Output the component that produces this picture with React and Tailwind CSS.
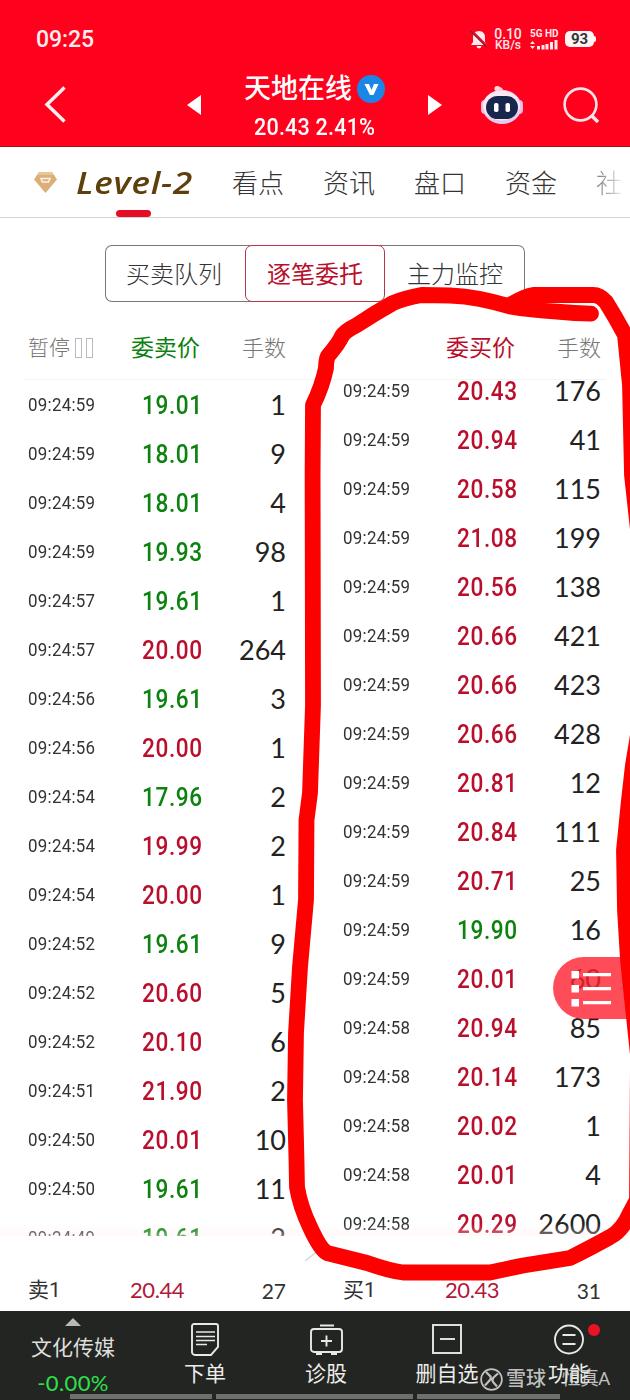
import React from 'react';

const sellOrders = [
    ["09:24:59", "19.01", "1", "down"],
    ["09:24:59", "18.01", "9", "down"],
    ["09:24:59", "18.01", "4", "down"],
    ["09:24:59", "19.93", "98", "down"],
    ["09:24:57", "19.61", "1", "down"],
    ["09:24:57", "20.00", "264", "up"],
    ["09:24:56", "19.61", "3", "down"],
    ["09:24:56", "20.00", "1", "up"],
    ["09:24:54", "17.96", "2", "down"],
    ["09:24:54", "19.99", "2", "up"],
    ["09:24:54", "20.00", "1", "up"],
    ["09:24:52", "19.61", "9", "down"],
    ["09:24:52", "20.60", "5", "up"],
    ["09:24:52", "20.10", "6", "up"],
    ["09:24:51", "21.90", "2", "up"],
    ["09:24:50", "20.01", "10", "up"],
    ["09:24:50", "19.61", "11", "down"],
    ["09:24:49", "19.61", "2", "down"],
];

const buyOrders = [
    ["09:24:59", "20.43", "176", "up"],
    ["09:24:59", "20.94", "41", "up"],
    ["09:24:59", "20.58", "115", "up"],
    ["09:24:59", "21.08", "199", "up"],
    ["09:24:59", "20.56", "138", "up"],
    ["09:24:59", "20.66", "421", "up"],
    ["09:24:59", "20.66", "423", "up"],
    ["09:24:59", "20.66", "428", "up"],
    ["09:24:59", "20.81", "12", "up"],
    ["09:24:59", "20.84", "111", "up"],
    ["09:24:59", "20.71", "25", "up"],
    ["09:24:59", "19.90", "16", "down"],
    ["09:24:59", "20.01", "60", "up"],
    ["09:24:58", "20.94", "85", "up"],
    ["09:24:58", "20.14", "173", "up"],
    ["09:24:58", "20.02", "1", "up"],
    ["09:24:58", "20.01", "4", "up"],
    ["09:24:58", "20.29", "2600", "up"],
];

function StatusBar() {
    return (
        <div className="flex h-[58px] items-center pl-9 pr-[34px] pt-5">
            <span className="text-[23px] font-medium leading-none tracking-[-0.1px] text-[#ffeef0]">09:25</span>
            <div className="ml-auto flex h-6 items-center">
                <svg className="mr-[7px] h-[19px] w-[18px]" viewBox="0 0 18 19">
                    <path d="M9 1c-4 0-6 3-6 6v5l-2 3h16l-2-3V7c0-3-2-6-6-6z" fill="#ffe9ec" />
                    <path d="M6.500 16h5a2.500 2.500 0 0 1-5 0z" fill="#ffe9ec" />
                    <path d="M1.500 0.500l16 16" stroke="#ff001d" strokeWidth="2" />
                    <path d="M0.500 1l16 16" stroke="#7c2630" strokeWidth="1.200" />
                </svg>
                <div className="mr-[9px] flex w-[26px] flex-col items-center text-[12px] font-medium leading-[11px] text-[#ffe9ec]">
                    <span className="text-[14px] leading-[12px] tracking-[-0.1px]">0.10</span>
                    <span className="leading-[11px]">KB/s</span>
                </div>
                <div className="mr-[6px] flex w-[29px] flex-col gap-[2px] text-[#ffe9ec]">
                    <span className="whitespace-nowrap text-[10px] font-bold leading-[9px]">5G HD</span>
                    <svg className="h-[10px] w-[28px]" viewBox="0 0 28 10" fill="currentColor">
                        <path d="M0 4l2.500-3L5 4zM0 6l2.500 3L5 6z" />
                        <rect x="7" y="6" width="3" height="3.500" />
                        <rect x="11.500" y="5" width="3" height="4.500" />
                        <rect x="15.500" y="4" width="3" height="5.500" />
                        <rect x="20" y="2" width="3" height="7.500" />
                        <rect x="24.500" y="0" width="3" height="9.500" />
                    </svg>
                </div>
                <div className="flex items-center">
                    <span className="flex h-4 w-[29px] items-center justify-center rounded-[5px] bg-[#fff5f5] text-[15px] font-bold leading-none text-[#333]">93</span>
                    <span className="h-[6px] w-[2px] rounded-r bg-[#fff5f5]"></span>
                </div>
            </div>
        </div>
    );
}

function RobotIcon() {
    return (
        <svg className="h-[40px] w-[44px]" viewBox="0 0 44 40">
            <path d="M22 7c0-3-2-4-5-4" fill="none" stroke="#ffc4cf" strokeWidth="3" strokeLinecap="round" />
            <circle cx="17" cy="3.500" r="2.600" fill="#ffd6dd" />
            <rect x="1" y="15" width="8" height="14" rx="4" fill="#f5b9cf" />
            <rect x="35" y="15" width="8" height="14" rx="4" fill="#f0b5e0" />
            <ellipse cx="22" cy="22" rx="19.500" ry="17" fill="#e3c8f2" />
            <ellipse cx="21.500" cy="20.500" rx="18.500" ry="15" fill="#fce8f3" />
            <rect x="6" y="11" width="32" height="23" rx="11.500" fill="#17264d" />
            <rect x="14" y="18" width="4.500" height="9" rx="1.800" fill="#fff" />
            <rect x="25.500" y="18" width="4.500" height="9" rx="1.800" fill="#fff" />
        </svg>
    );
}

function Header() {
    return (
        <header className="h-[147px] shrink-0 border-b border-[#a3131e] bg-[#ff001d] text-white">
            <StatusBar />
            <div className="flex h-[88px] items-center pt-[5px]">
                <svg className="ml-[44px] h-[38px] w-[23px]" viewBox="0 0 23 38" fill="none" stroke="#ffeff0" strokeWidth="3.500">
                    <path d="M20.500 1.500L3 18.500l17.500 17" />
                </svg>
                <svg className="ml-[120px] h-[22px] w-[14px]" viewBox="0 0 14 22" fill="#fff">
                    <path d="M0 11L14 1v20z" />
                </svg>
                <div className="ml-[43px] flex w-[144px] flex-col items-start pt-[7px]">
                    <div className="flex items-center gap-[5px]">
                        <span className="whitespace-nowrap text-[27px] font-medium leading-[38px]">天地在线</span>
                        <svg className="h-7 w-7" viewBox="0 0 28 28">
                            <circle cx="14" cy="14" r="14" fill="#1c86e6" />
                            <path d="M7.500 9h4.500l2.500 6 2.500-6h4.500l-5 11h-3.500z" fill="#fff" />
                        </svg>
                    </div>
                    <span className="ml-[10px] origin-left scale-x-90 whitespace-nowrap text-[24px] font-medium leading-[38px] tracking-[0.2px]">20.43 2.41%</span>
                </div>
                <svg className="ml-[40px] h-[22px] w-[14px]" viewBox="0 0 14 22" fill="#fff">
                    <path d="M14 11L0 1v20z" />
                </svg>
                <div className="ml-[38px]">
                    <RobotIcon />
                </div>
                <svg className="ml-[39px] h-[36px] w-[36px]" viewBox="0 0 36 36" fill="none" stroke="#ffe3e6" strokeWidth="2.600">
                    <circle cx="17.500" cy="17.500" r="15.900" />
                    <path d="M28 28l7 7" strokeWidth="3.500" />
                </svg>
            </div>
        </header>
    );
}

function Tabs() {
    return (
        <nav className="flex h-[71px] shrink-0 items-center overflow-hidden border-b border-[#d4d4d4] pl-[34px] text-[26px] text-[#333]">
            <svg className="h-[21px] w-[23px]" viewBox="0 0 23 21">
                <path d="M5 0h13l5 7.500L11.500 21 0 7.500z" fill="#dcae78" />
                <path d="M5 0h13l2 3H3z" fill="#e8c59a" />
                <path d="M7 6.500h9l-1.500 3.500h-6z" fill="none" stroke="#fdf3e3" strokeWidth="1.600" />
            </svg>
            <div className="relative ml-[19px] flex h-full w-[117px] items-center">
                <span className="origin-left scale-x-[1.13] whitespace-nowrap font-['Open_Sans',sans-serif] text-[31px] font-semibold italic leading-none tracking-[0.7px] text-[#5d400b]">Level-2</span>
                <span className="absolute bottom-0 left-[40px] h-[7px] w-[35px] rounded-full bg-[#e60d27]"></span>
            </div>
            <div className="ml-[39px] flex gap-[39px] whitespace-nowrap pt-[4px] font-light">
                <span>看点</span>
                <span>资讯</span>
                <span>盘口</span>
                <span>资金</span>
                <span className="bg-gradient-to-r from-[#777] to-[#eee] bg-clip-text text-transparent">社</span>
            </div>
        </nav>
    );
}

function Segments() {
    return (
        <div className="mx-auto mt-[27px] flex h-[57px] w-[420px] shrink-0 items-stretch text-[24px] font-light leading-none text-[#333]">
            <div className="flex w-[146px] items-center rounded-l-[7px] border border-r-0 border-[#777] pl-5 pt-[3px]">买卖队列</div>
            <div className="z-10 -ml-[6px] flex w-[140px] items-center justify-center rounded-[7px] border border-[#b6344a] bg-white pt-[3px] font-normal text-[#b90f2c]">逐笔委托</div>
            <div className="-ml-[6px] flex w-[146px] items-center justify-end rounded-r-[7px] border border-l-0 border-[#777] pr-[21px] pt-[3px]">主力监控</div>
        </div>
    );
}

function ColumnHeads() {
    return (
        <div className="grid h-[77px] shrink-0 grid-cols-2 pt-[17px] text-[22px] font-light leading-none text-[#777]">
            <div className="flex h-[59px] items-center pl-7 pr-[29px]">
                <span className="text-[21px]">暂停</span>
                <span className="ml-[5px] flex gap-[4px] pb-[2px]">
                    <i className="h-5 w-[7px] border border-[#bbb]"></i>
                    <i className="h-5 w-[7px] border border-[#bbb]"></i>
                </span>
                <span className="ml-[38px] text-[23px] font-normal text-[#0c820f]">委卖价</span>
                <span className="ml-auto">手数</span>
            </div>
            <div className="flex h-[59px] items-center pl-[131px] pr-[29px]">
                <span className="text-[23px] font-normal text-[#b90f2c]">委买价</span>
                <span className="ml-auto">手数</span>
            </div>
        </div>
    );
}

function OrderRow({ order }) {
    const [time, price, volume, trend] = order;
    return (
        <div className="grid h-[49px] grid-cols-[114px_60px_1fr] items-center pl-7 pr-[29px] leading-none">
            <span className="origin-left scale-x-[0.89] text-[19px] tracking-[0.3px] text-[#333]">{time}</span>
            <span className={`origin-left scale-x-[0.87] text-[26px] font-medium tracking-[0.7px] ${trend === "up" ? "text-[#b90f2c]" : "text-[#0c820f]"}`}>{price}</span>
            <span className="text-right font-['Lato',sans-serif] text-[27px] text-[#222]">{volume}</span>
        </div>
    );
}

function OrderBook() {
    return (
        <div className="relative grid h-[857px] shrink-0 grid-cols-2 overflow-hidden">
            <div className="pt-px">
                {sellOrders.map((order, i) => <OrderRow key={i} order={order} />)}
            </div>
            <div className="-mt-[13px]">
                {buyOrders.map((order, i) => <OrderRow key={i} order={order} />)}
            </div>
            <div className="absolute inset-x-6 top-0 h-px bg-[#f3f3f3]"></div>
            <div className="absolute inset-x-0 bottom-0 h-3 bg-gradient-to-b from-white/0 to-[#fff0f0]/40"></div>
        </div>
    );
}

function BestQuote({ label, price, volume }) {
    return (
        <div className="grid grid-cols-[102px_70px_1fr] items-center pl-7 pr-[29px] text-[21px] leading-none text-[#333]">
            <span>{label}</span>
            <span className="font-['Lato',sans-serif] text-[22px] tracking-[-0.4px] text-[#b3183a]">{price}</span>
            <span className="text-right font-['Lato',sans-serif]">{volume}</span>
        </div>
    );
}

const navIcons = {
    order: (
        <>
            <path d="M3 1h22a2 2 0 0 1 2 2v21l-7 8H4a3 3 0 0 1-3-3V3a2 2 0 0 1 2-2z" />
            <path d="M5 9h19M5 13.500h19M5 17.500h19M5 21.500h11" strokeWidth="1.700" />
        </>
    ),
    diagnose: (
        <>
            <path d="M11 2.500h14M5 6h25a3 3 0 0 1 3 3v17a3 3 0 0 1-3 3H5a3 3 0 0 1-3-3V9a3 3 0 0 1 3-3z" />
            <path d="M17.500 12.500v11M12 18h11M7 31h6M22 31h6" />
        </>
    ),
    remove: (
        <>
            <rect x="1" y="2" width="28" height="28" />
            <path d="M8 16h15" />
        </>
    ),
    more: (
        <>
            <circle cx="15" cy="16.500" r="14" />
            <path d="M8.500 12h13M8.500 21h13" />
        </>
    ),
};

function NavItem({ icon, label, className, iconClass, viewBox }) {
    return (
        <div className={`relative flex w-[80px] flex-col items-center ${className}`}>
            <svg className={`h-[33px] ${iconClass}`} viewBox={viewBox} fill="none" stroke="#e8e8e6" strokeWidth="1.900">
                {navIcons[icon]}
            </svg>
            <span className="mt-[5px] whitespace-nowrap text-[21px] leading-[26px] text-[#ededeb]">{label}</span>
        </div>
    );
}

function BottomNav() {
    return (
        <footer className="relative flex h-[89px] shrink-0 items-start bg-[#232522]">
            <div className="flex w-[146px] flex-col items-center pt-[7px]">
                <svg className="h-2 w-4" viewBox="0 0 16 8" fill="#b9bab7">
                    <path d="M8 0l8 8H0z" />
                </svg>
                <span className="mt-[9px] text-[21px] leading-[26px] text-[#dededc]">文化传媒</span>
                <span className="mt-[8px] font-['Lato',sans-serif] text-[22px] leading-7 tracking-[0.4px] text-[#2ee04a]">-0.00%</span>
            </div>
            <NavItem icon="order" label="下单" className="ml-[19px] mt-[12px]" iconClass="w-[28px]" viewBox="0 0 28 33" />
            <NavItem icon="diagnose" label="诊股" className="ml-[41px] mt-[12px]" iconClass="w-[35px]" viewBox="0 0 35 33" />
            <NavItem icon="remove" label="删自选" className="ml-[41px] mt-[12px]" iconClass="w-[30px]" viewBox="0 0 30 33" />
            <NavItem icon="more" label="功能" className="ml-[42px] mt-[12px]" iconClass="w-[30px]" viewBox="0 0 30 33" />
            <span className="absolute left-[588px] top-[13px] h-3 w-3 rounded-full bg-[#ec1226]"></span>
            <div className="absolute bottom-px left-[70px] flex h-[5px] w-[490px] gap-[4px]">
                <i className="h-full w-[142px] bg-[#6d706b]"></i>
                <i className="h-full w-[197px] bg-[#6d706b]"></i>
                <i className="h-full flex-1 bg-[#6d706b]"></i>
            </div>
            {/* watermark */}
            <div className="absolute left-[480px] top-[56px] flex h-6 items-center whitespace-nowrap text-[#dcdcda]/85">
                <svg className="h-[23px] w-[23px]" viewBox="0 0 23 23" fill="none" stroke="currentColor" strokeWidth="1.700">
                    <circle cx="11.500" cy="11.500" r="10.400" />
                    <path d="M6 4l4.500 4.500c1 2 0 3.500-2 5l-3.500 4M18 5.500l-4.500 4c-1.500 2-1 4 0 5l3.500 4" strokeWidth="2.200" />
                </svg>
                <span className="ml-[3px] text-[20px] font-medium leading-6">雪球</span>
                <span className="ml-[2px] text-[18px] leading-6">·</span>
                <span className="ml-[9px] text-[19px] leading-6 tracking-[-0.8px]">恒真A</span>
            </div>
        </footer>
    );
}

function FloatingMenu() {
    return (
        <button className="absolute left-[553px] top-[957px] flex h-[62px] w-[77px] items-center rounded-l-full bg-[#ff1f2f]/80 pl-[18px]">
            <svg className="h-[37px] w-[42px]" viewBox="0 0 42 37" fill="#fff">
                <path d="M0.500 1h7.500v7.500h-7.500zM0.500 15h7.500v7.500h-7.500zM0.500 29h7.500v7.500h-7.500z" />
                <path d="M12 3h28v3.200H12zM12 17h28v3.200H12zM12 31h28v3.200H12z" />
            </svg>
        </button>
    );
}

// hand-drawn circle around the buy side
function MarkerStroke() {
    return (
        <svg className="pointer-events-none absolute left-0 top-0 h-[1400px] w-[630px]" viewBox="0 0 630 1400" fill="none" stroke="#fd0000" strokeWidth="15.800" strokeLinecap="round" strokeLinejoin="round">
            <path d="M591 313.700Q575 313.500 557 311.700Q530 310 510 306.500Q495 302 480 299Q465 296 450 295.500L421.500 295Q405 298 393 303Q375 313 357 325Q345 331 342 336Q339 343 328 356Q326 360 326 368Q322 387 313 405L312.600 475L313 705L310 793L306.500 820L306 900L300 967L296 1033L295 1100L296.500 1160L297 1187Q300 1206 310 1227Q320 1249 327 1253L367 1263Q390 1271 403 1272.500L490 1272.500L523 1265.500L570 1258Q592 1247 610 1237Q622 1231 630 1213L637 1200L638 1055L628 960L625 910L624 850L629 800L633 765L638 735L638 530L632 475L630 385L625 335Q616 318 606 302Q600 295 593 295L533 295Q525 296 510 305" />
        </svg>
    );
}

export default function App() {
    return (
        <div className="relative flex h-[1400px] w-[630px] flex-col overflow-hidden bg-white font-['Roboto','Noto_Sans_CJK_SC',sans-serif]">
            <Header />
            <Tabs />
            <Segments />
            <ColumnHeads />
            <OrderBook />
            <div className="grid h-[75px] shrink-0 grid-cols-2 pt-[33px]">
                <BestQuote label="卖1" price="20.44" volume="27" />
                <BestQuote label="买1" price="20.43" volume="31" />
            </div>
            <BottomNav />
            <svg className="absolute left-[304px] top-[1250px] h-3 w-4" viewBox="0 0 16 12" fill="none" stroke="#d5d9d5" strokeWidth="1.500">
                <path d="M1 11L15 0" />
            </svg>
            <FloatingMenu />
            <MarkerStroke />
        </div>
    );
}
